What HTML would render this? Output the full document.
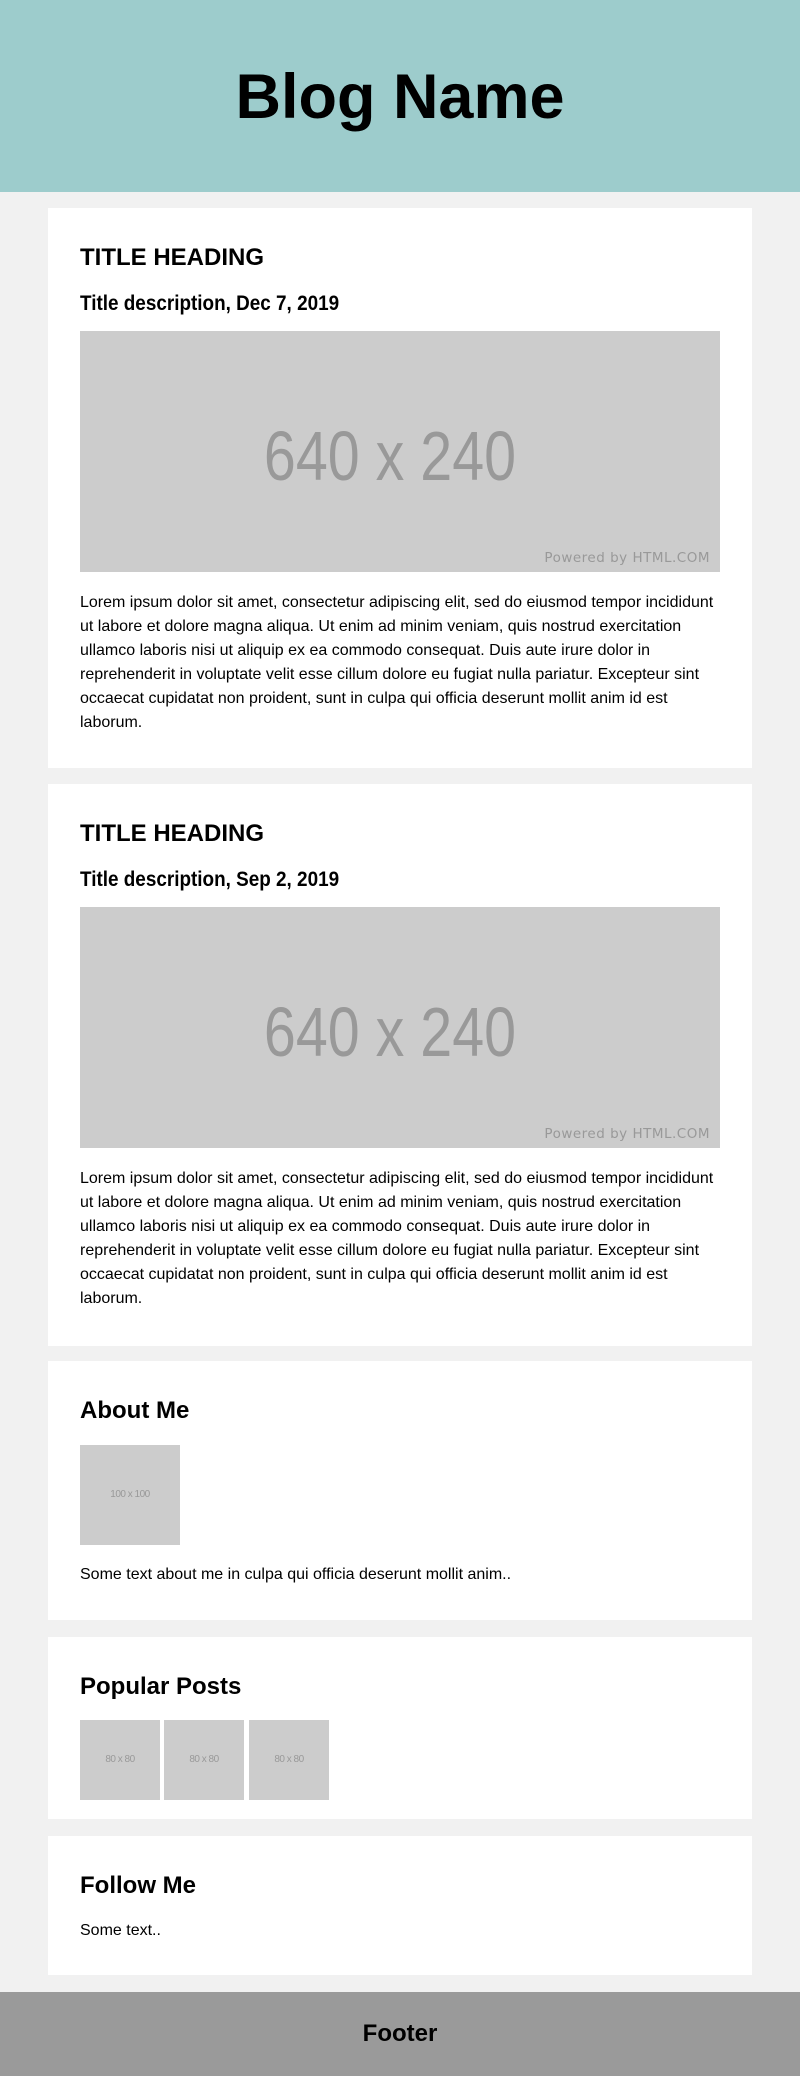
<!DOCTYPE html>
<html><head><meta charset="utf-8"><style>
*{margin:0;padding:0;box-sizing:border-box}
body{width:800px;height:2076px;background:#f1f1f1;position:relative;font-family:"Liberation Sans",Arial,sans-serif;color:#000;overflow:hidden}
.a{position:absolute}
.hdr{left:0;top:0;width:800px;height:192px;background:#9dcccc}
.blog{left:0;top:62px;width:800px;text-align:center;font-size:63px;font-weight:bold;line-height:70px}
.card{background:#fff;left:48px;width:704px}
.h2{font-size:24px;font-weight:bold;line-height:30px;left:80px;white-space:nowrap}
.h3{font-size:21px;font-weight:bold;line-height:24px;left:80px;white-space:nowrap;transform:scaleX(.9);transform-origin:left}
.p{font-size:16px;line-height:24px;left:80px;width:640px}
.img{background:#cccccc;left:80px;width:640px;height:241px;overflow:hidden}
.big{position:absolute;left:-10px;width:640px;top:85px;text-align:center;font-size:70px;line-height:80px;color:#999;transform:scaleX(.82);transform-origin:320px 0}
.pw{position:absolute;right:10px;bottom:6px;font-family:"DejaVu Sans",sans-serif;font-size:13.5px;color:#999;letter-spacing:.5px}
.th{background:#ccc;color:#999;font-size:10px;text-align:center;letter-spacing:-.5px}
.ftr{left:0;top:1992px;width:800px;height:84px;background:#9a9a9a}
</style></head><body>
<div class="a hdr"></div>
<div class="a blog">Blog Name</div>

<div class="a card" style="top:208px;height:560px"></div>
<div class="a h2" style="top:243px">TITLE HEADING</div>
<div class="a h3" style="top:292px">Title description, Dec 7, 2019</div>
<div class="a img" style="top:331px"><div class="big">640 x 240</div><div class="pw">Powered by HTML.COM</div></div>
<div class="a p" style="top:591px">Lorem ipsum dolor sit amet, consectetur adipiscing elit, sed do eiusmod tempor incididunt ut labore et dolore magna aliqua. Ut enim ad minim veniam, quis nostrud exercitation ullamco laboris nisi ut aliquip ex ea commodo consequat. Duis aute irure dolor in reprehenderit in voluptate velit esse cillum dolore eu fugiat nulla pariatur. Excepteur sint occaecat cupidatat non proident, sunt in culpa qui officia deserunt mollit anim id est laborum.</div>

<div class="a card" style="top:784px;height:562px"></div>
<div class="a h2" style="top:819px">TITLE HEADING</div>
<div class="a h3" style="top:868px">Title description, Sep 2, 2019</div>
<div class="a img" style="top:907px"><div class="big">640 x 240</div><div class="pw">Powered by HTML.COM</div></div>
<div class="a p" style="top:1167px">Lorem ipsum dolor sit amet, consectetur adipiscing elit, sed do eiusmod tempor incididunt ut labore et dolore magna aliqua. Ut enim ad minim veniam, quis nostrud exercitation ullamco laboris nisi ut aliquip ex ea commodo consequat. Duis aute irure dolor in reprehenderit in voluptate velit esse cillum dolore eu fugiat nulla pariatur. Excepteur sint occaecat cupidatat non proident, sunt in culpa qui officia deserunt mollit anim id est laborum.</div>

<div class="a card" style="top:1361px;height:259px"></div>
<div class="a h2" style="top:1396px">About Me</div>
<div class="a th" style="left:80px;top:1445px;width:100px;height:100px;line-height:100px">100 x 100</div>
<div class="a p" style="top:1563px">Some text about me in culpa qui officia deserunt mollit anim..</div>

<div class="a card" style="top:1637px;height:182px"></div>
<div class="a h2" style="top:1672px">Popular Posts</div>
<div class="a th" style="left:80px;top:1720px;width:80px;height:80px;line-height:80px">80 x 80</div>
<div class="a th" style="left:164px;top:1720px;width:80px;height:80px;line-height:80px">80 x 80</div>
<div class="a th" style="left:249px;top:1720px;width:80px;height:80px;line-height:80px">80 x 80</div>

<div class="a card" style="top:1836px;height:139px"></div>
<div class="a h2" style="top:1871px">Follow Me</div>
<div class="a p" style="top:1919px">Some text..</div>

<div class="a ftr"></div>
<div class="a h2" style="left:0;width:800px;text-align:center;top:2019px">Footer</div>
</body></html>
